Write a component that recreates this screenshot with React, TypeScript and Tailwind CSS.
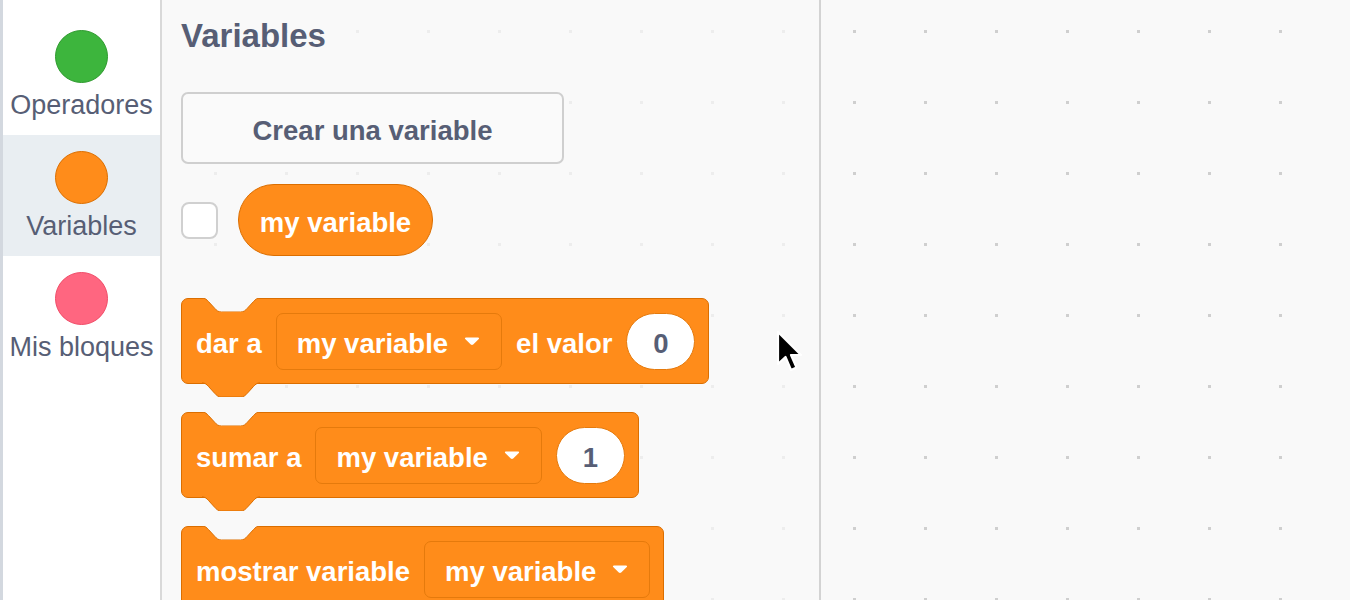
import type { ReactNode } from "react";

const font = { fontFamily: '"Liberation Sans", Arial, Helvetica, sans-serif' };

type Category = { name: string; fill: string; ring: string; active?: boolean };

const categories: Category[] = [
  { name: "Operadores", fill: "bg-[#3db53d]", ring: "border-[#2f9a2f]" },
  { name: "Variables", fill: "bg-[#ff8c1a]", ring: "border-[#db6e00]", active: true },
  { name: "Mis bloques", fill: "bg-[#ff6680]", ring: "border-[#f04c68]" },
];

// Scratch notch outline, 36 x 8 units
const notchPath = "M0,0 c2,0 3,1 4,2 l4,4 c1,1 2,2 4,2 h12 c2,0 3,-1 4,-2 l4,-4 c1,-1 2,-2 4,-2";

function Dropdown() {
  return (
    <div className="flex h-[57px] items-center gap-[16px] rounded-[7px] border border-[#e57a0c] bg-[#ff8c1a] pl-[20px] pr-[21px] pt-[5px]">
      <span>my variable</span>
      <svg className="-mt-[5px]" width="16" height="10" viewBox="0 0 16 10">
        <path d="M2,1.5 h12 c1,0 1.4,1 0.8,1.6 l-5.6,5.4 c-0.7,0.6 -1.7,0.6 -2.4,0 l-5.6,-5.4 c-0.6,-0.6 -0.2,-1.6 0.8,-1.6 z" fill="#fff" />
      </svg>
    </div>
  );
}

function NumberSlot({ value }: { value: string }) {
  return (
    <div className="flex h-[57px] w-[69px] items-center justify-center rounded-full border border-[#e57a0c] bg-white pt-[5px] text-[#575e75]">
      {value}
    </div>
  );
}

function StackBlock({ children }: { children: ReactNode }) {
  return (
    <div className="relative flex h-[86px] w-fit items-center gap-[14px] rounded-[7px] border border-[#db6e00] bg-[#ff8c1a] pl-[14px] pr-[13px] text-[27.5px] font-bold text-white">
      {/* top notch */}
      <svg className="absolute left-[20px] top-[-1px]" width="58" height="14" viewBox="0 0 36 8" preserveAspectRatio="none">
        <path d={notchPath + " Z"} fill="#f9f9f9" />
        <path d={notchPath} fill="none" stroke="#db6e00" strokeWidth="1" vectorEffect="non-scaling-stroke" />
      </svg>
      {/* bottom tab */}
      <svg className="absolute bottom-[-14px] left-[20px]" width="58" height="15" viewBox="0 -0.5 36 8.5" preserveAspectRatio="none">
        <path d={notchPath + " Z"} fill="#ff8c1a" />
        <path d={notchPath} fill="none" stroke="#db6e00" strokeWidth="1" vectorEffect="non-scaling-stroke" />
      </svg>
      {children}
    </div>
  );
}

function Label({ children }: { children: ReactNode }) {
  return <span className="pt-[5px]">{children}</span>;
}

export default function App() {
  return (
    <div className="flex h-[600px] w-[1350px] overflow-hidden bg-[#f9f9f9]" style={font}>
      {/* Category menu */}
      <div className="flex w-[162px] shrink-0 flex-col border-l-[3px] border-r-2 border-l-[#d3d8df] border-r-[#d9d9d9] bg-white pt-[14px]">
        {categories.map((c) => (
          <div
            key={c.name}
            className={`flex h-[121px] flex-col items-center pt-[16px] ${c.active ? "bg-[#e9eef2]" : ""}`}
          >
            <div className={`h-[53px] w-[53px] rounded-full border ${c.fill} ${c.ring}`} />
            <div className="mt-[6px] whitespace-nowrap text-[27px] leading-[32px] text-[#575e75]">{c.name}</div>
          </div>
        ))}
      </div>

      {/* Flyout */}
      <div className="relative w-[659px] shrink-0 border-r-2 border-r-[#d3d3d3] bg-[#f9f9f9] bg-[radial-gradient(circle,#ededed_1.5px,transparent_2px)] bg-[length:71px_71px] bg-[position:18px_-4px] pl-[19px]">
        <h2 className="mt-[16px] text-[33px] font-bold leading-[40px] text-[#575e75]">Variables</h2>

        <button className="mt-[36px] flex h-[72px] w-[383px] items-center justify-center rounded-[7px] border-2 border-[#cfcfcf] bg-[#fafafa] pt-[5px] text-[27.5px] font-bold text-[#575e75]">
          Crear una variable
        </button>

        <div className="mt-[20px] flex items-center gap-[20px]">
          <div className="h-[37px] w-[37px] rounded-[8px] border-2 border-[#d0d0d0] bg-white" />
          <div className="flex h-[72px] w-[195px] items-center justify-center rounded-full border border-[#db6e00] bg-[#ff8c1a] pt-[5px] text-[27.5px] font-bold text-white">
            my variable
          </div>
        </div>

        <div className="mt-[42px] flex flex-col gap-[28px]">
          <StackBlock>
            <Label>dar a</Label>
            <Dropdown />
            <Label>el valor</Label>
            <NumberSlot value="0" />
          </StackBlock>
          <StackBlock>
            <Label>sumar a</Label>
            <Dropdown />
            <NumberSlot value="1" />
          </StackBlock>
          <StackBlock>
            <Label>mostrar variable</Label>
            <Dropdown />
          </StackBlock>
        </div>

        {/* mouse pointer */}
        <svg className="absolute left-[613px] top-[329px]" width="30" height="46" viewBox="0 0 30 46">
          <path d="M3,3 L3,35 L10.5,28 L16,41 L21.5,38.5 L16,26 L26,26 Z" fill="#000" stroke="#fff" strokeWidth="2.2" strokeLinejoin="round" />
        </svg>
      </div>

      {/* Workspace */}
      <div className="flex-1 bg-[#f9f9f9] bg-[radial-gradient(circle,#cfcfcf_1.6px,transparent_2px)] bg-[length:71px_71px] bg-[position:-2px_-4px]" />
    </div>
  );
}
